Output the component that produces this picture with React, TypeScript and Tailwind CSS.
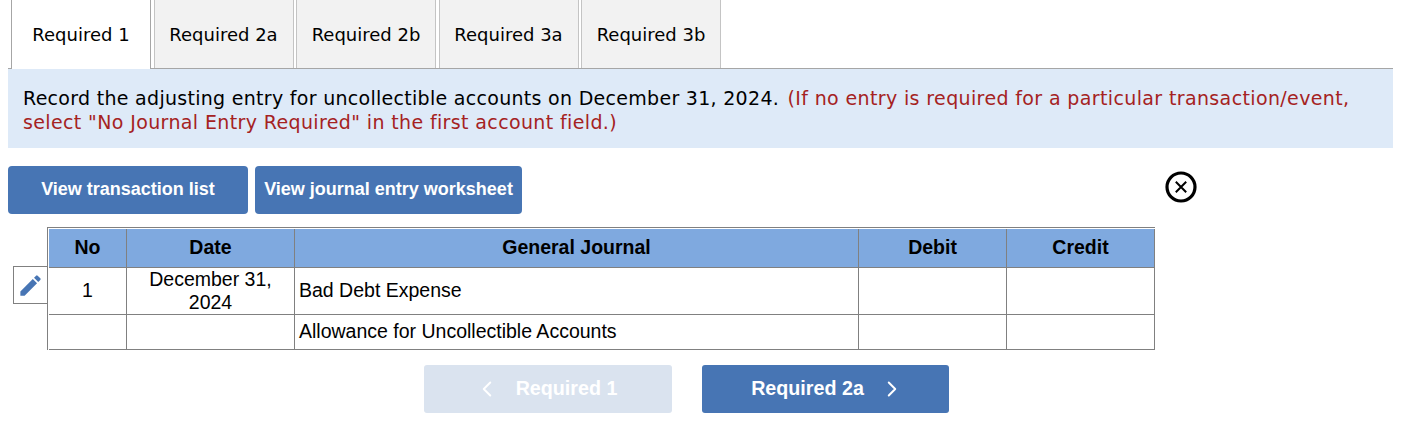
import { ChevronLeft, ChevronRight } from 'lucide-react';

const tabs = ['Required 2a', 'Required 2b', 'Required 3a', 'Required 3b'];

const sans = "font-['Liberation_Sans',Arial,sans-serif]";
const wide = "font-['DejaVu_Sans',Verdana,sans-serif]";

function Tabs() {
  return (
    <div className={`${wide} flex h-[69px] gap-[2.5px] border-b border-[#a6a6a6] pl-[3px] text-[18px] text-black`}>
      <div className="flex h-[69px] w-[140px] items-center justify-center border-x border-[#a6a6a6] bg-white">Required 1</div>
      {tabs.map((tab) => (
        <div key={tab} className="flex h-[68px] w-[140px] items-center justify-center border-x border-[#c4c4c4] bg-[#f2f2f2]">
          {tab}
        </div>
      ))}
    </div>
  );
}

function BlueButton({ width, children }: { width: string; children: string }) {
  return (
    <button className={`${width} flex h-12 items-center justify-center rounded-[4px] bg-[#4775b4] pb-[2px] text-[18px] font-bold text-white`}>
      {children}
    </button>
  );
}

function PencilIcon() {
  return (
    <svg viewBox="0 0 24 24" className="h-[27px] w-[27px] fill-[#4775b4]">
      <path d="M3 17.25V21h3.75L17.81 9.94l-3.75-3.75L3 17.25zM20.71 7.04a1 1 0 0 0 0-1.41l-2.34-2.34a1 1 0 0 0-1.41 0l-1.83 1.83 3.75 3.75 1.83-1.83z" />
    </svg>
  );
}

function CloseIcon() {
  return (
    <svg viewBox="0 0 32 32" className="h-8 w-8 fill-none stroke-black">
      <circle cx="16" cy="16" r="14" strokeWidth="3.2" />
      <path d="M10.8 10.8l10.4 10.4M21.2 10.8L10.8 21.2" strokeWidth="2" />
    </svg>
  );
}

const headCell = 'border-b border-r border-[#808080] font-bold';
const bodyCell = 'border-b border-r border-[#808080]';

export default function App() {
  return (
    <div className={`${sans} h-[436px] w-[1420px] overflow-hidden bg-white`}>
      <div className="ml-2 w-[1385px]">
        <Tabs />
        <div className={`${wide} h-[79px] bg-[#deeaf8] pl-[15px] pt-[17px] text-[19px] leading-6 tracking-[0.29px] text-black`}>
          Record the adjusting entry for uncollectible accounts on December 31, 2024.{' '}
          <span className="ml-[2px] tracking-[0.37px] text-[#a52222]">
            (If no entry is required for a particular transaction/event, select "No Journal Entry Required" in the first account field.)
          </span>
        </div>
      </div>

      <div className="ml-2 mt-[18px] flex items-center">
        <BlueButton width="w-[240px]">View transaction list</BlueButton>
        <div className="ml-[7px]">
          <BlueButton width="w-[267px]">View journal entry worksheet</BlueButton>
        </div>
        <div className="ml-[643px] mt-[-6px]">
          <CloseIcon />
        </div>
      </div>

      <div className="relative ml-[47px] mt-[13px] w-[1108px] border-l border-t border-[#808080] pl-px pt-px">
        <div className="absolute left-[-35px] top-[38px] flex h-[38px] w-[34px] items-center justify-start border border-r-0 border-[#808080] bg-white pl-[3px]">
          <PencilIcon />
        </div>
        <table className="w-[1106px] table-fixed border-separate border-spacing-0 text-center text-[19.5px] text-black">
          <colgroup>
            <col className="w-[78px]" />
            <col className="w-[168px]" />
            <col className="w-[564px]" />
            <col className="w-[148px]" />
            <col className="w-[148px]" />
          </colgroup>
          <thead>
            <tr className="h-[39px] bg-[#7fa9df]">
              <th className={headCell}>No</th>
              <th className={headCell}>Date</th>
              <th className={headCell}>General Journal</th>
              <th className={headCell}>Debit</th>
              <th className={headCell}>Credit</th>
            </tr>
          </thead>
          <tbody>
            <tr className="h-[47px]">
              <td className={bodyCell}>1</td>
              <td className={`${bodyCell} leading-[23px]`}>December 31, 2024</td>
              <td className={`${bodyCell} pl-1 text-left`}>Bad Debt Expense</td>
              <td className={bodyCell}></td>
              <td className={bodyCell}></td>
            </tr>
            <tr className="h-[35px]">
              <td className={bodyCell}></td>
              <td className={bodyCell}></td>
              <td className={`${bodyCell} pl-1 text-left`}>Allowance for Uncollectible Accounts</td>
              <td className={bodyCell}></td>
              <td className={bodyCell}></td>
            </tr>
          </tbody>
        </table>
      </div>

      <div className="ml-[424px] mt-[15px] flex gap-[30px] text-[19.7px] font-bold text-white">
        <button className="flex h-12 w-[248px] items-center justify-center gap-[16px] rounded-[3px] bg-[#dae3ef] pb-px pr-[5px]">
          <ChevronLeft size={26} strokeWidth={1.8} />
          <span>Required 1</span>
        </button>
        <button className="flex h-12 w-[247px] items-center justify-center gap-[15px] rounded-[3px] bg-[#4775b4] pb-px pl-[5px]">
          <span>Required 2a</span>
          <ChevronRight size={26} strokeWidth={1.8} />
        </button>
      </div>
    </div>
  );
}
